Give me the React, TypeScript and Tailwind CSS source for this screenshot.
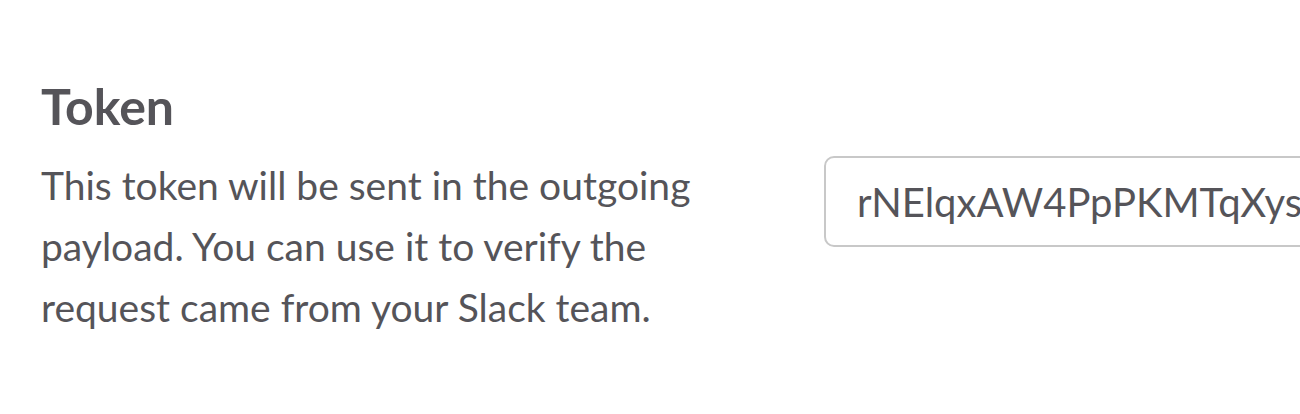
import React from "react";

export default function App() {
  return (
    <div className="w-[1300px] h-[414px] overflow-hidden bg-white text-[#555459] font-['Lato',sans-serif]">
      <div className="pl-[41px] pt-[76px]">
        <h2 className="text-[50px] leading-[1.2] font-bold">Token</h2>
        <div className="mt-[19px] flex items-start">
          <p className="w-[700px] shrink-0 text-[39px] leading-[61px]">
            This token will be sent in the outgoing payload. You can use it to verify the request came from your Slack team.
          </p>
          <div className="ml-[83px] mt-[1px] h-[91px] w-[700px] shrink-0 rounded-[10px] border-2 border-[#c8c8c8] pl-[31px] flex items-center text-[40px] whitespace-nowrap overflow-hidden">
            rNElqxAW4PpPKMTqXys9Lm3aZ8dF
          </div>
        </div>
      </div>
    </div>
  );
}
